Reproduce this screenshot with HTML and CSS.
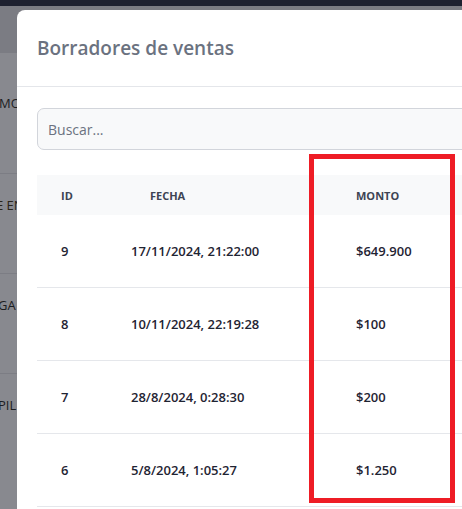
FILE: index.html
```html
<!DOCTYPE html>
<html lang="es">
<head>
    <meta charset="UTF-8">
    <meta name="viewport" content="width=device-width, initial-scale=1.0">
    <title>Borradores de ventas</title>
    <link rel="stylesheet" href="styles.css">
</head>
<body>

    <div class="page">
        <div class="topbar"></div>
        <div class="band"></div>
        <div class="menu">
            <div class="menu-item first"><span class="cut-mo">MO</span></div>
            <div class="menu-item"><span class="cut-en">E EN</span></div>
            <div class="menu-item"><span class="cut-ga">GA</span></div>
            <div class="menu-item"><span class="cut-pil">PIL</span></div>
        </div>
    </div>

    <div class="modal">
        <div class="modal-header">
            <h2>Borradores de ventas</h2>
        </div>
        <div class="modal-body">
            <input type="text" class="search" placeholder="Buscar...">

            <div class="table">
                <div class="row head">
                    <div class="cell id">ID</div>
                    <div class="cell fecha">FECHA</div>
                    <div class="cell monto">MONTO</div>
                </div>
                <div class="row">
                    <div class="cell id">9</div>
                    <div class="cell fecha">17/11/2024, 21:22:00</div>
                    <div class="cell monto">$649.900</div>
                </div>
                <div class="row">
                    <div class="cell id">8</div>
                    <div class="cell fecha">10/11/2024, 22:19:28</div>
                    <div class="cell monto">$100</div>
                </div>
                <div class="row">
                    <div class="cell id">7</div>
                    <div class="cell fecha">28/8/2024, 0:28:30</div>
                    <div class="cell monto">$200</div>
                </div>
                <div class="row">
                    <div class="cell id">6</div>
                    <div class="cell fecha">5/8/2024, 1:05:27</div>
                    <div class="cell monto">$1.250</div>
                </div>
            </div>
        </div>
    </div>

    <div class="highlight"></div>

</body>
</html>
```

FILE: styles.css
```css
body {
    margin: 0;
    font-family: "Open Sans", "Noto Sans", sans-serif;
    background-color: #88898f;
    overflow: hidden;
    height: 509px;
}
.topbar {
    height: 6px;
    background-color: #1e2130;
}
.band {
    height: 47px;
    background-color: #7b7c83;
}
.menu-item {
    box-sizing: border-box;
    height: 100px;
    padding-top: 22px;
    border-bottom: 1px solid #7c7d84;
    font-size: 13px;
    line-height: 18px;
    color: #1c1d22;
    white-space: nowrap;
    overflow: hidden;
}
.menu-item.first {
    height: 121px;
    padding-top: 41px;
}
.menu-item:last-child {
    border-bottom: none;
}
.menu-item span {
    display: inline-block;
}
.cut-mo { margin-left: -1px; }
.cut-en { margin-left: -4px; color: #2a2418; }
.cut-ga { margin-left: -2px; }
.cut-pil { margin-left: -2px; }

.modal {
    position: absolute;
    top: 10px;
    left: 17px;
    width: 520px;
    height: 540px;
    background-color: white;
    border-radius: 8px;
}
.modal-header {
    height: 76px;
    border-bottom: 1px solid #e4e6ea;
    display: flex;
    align-items: center;
    padding: 0 20px;
}
.modal-header h2 {
    margin: 0;
    font-size: 19px;
    font-weight: 600;
    color: #6b7280;
}
.modal-body {
    padding: 21px 20px;
}
.search {
    display: block;
    box-sizing: border-box;
    width: 100%;
    height: 42px;
    padding: 0 10px;
    border: 1px solid #d2d5db;
    border-radius: 7px;
    background-color: #f8f9fa;
    font-family: inherit;
    font-size: 14px;
}
.search::placeholder {
    color: #6b7280;
}
.table {
    margin-top: 25px;
}
.row {
    display: grid;
    grid-template-columns: 94px 201px 1fr;
    height: 72px;
    align-items: center;
    border-bottom: 1px solid #e5e7eb;
    font-size: 13px;
    font-weight: 600;
    color: #1f2433;
}
.row.head {
    height: 40px;
    border-bottom: none;
    background-color: #f8f9fa;
    font-size: 11px;
    font-weight: 700;
    color: #3d4453;
}
.cell.id, .cell.monto {
    padding-left: 24px;
}
.head .fecha {
    padding-left: 19px;
}
.highlight {
    position: absolute;
    left: 309px;
    top: 154px;
    width: 136px;
    height: 339px;
    border: 5px solid #ee1c25;
}
```
